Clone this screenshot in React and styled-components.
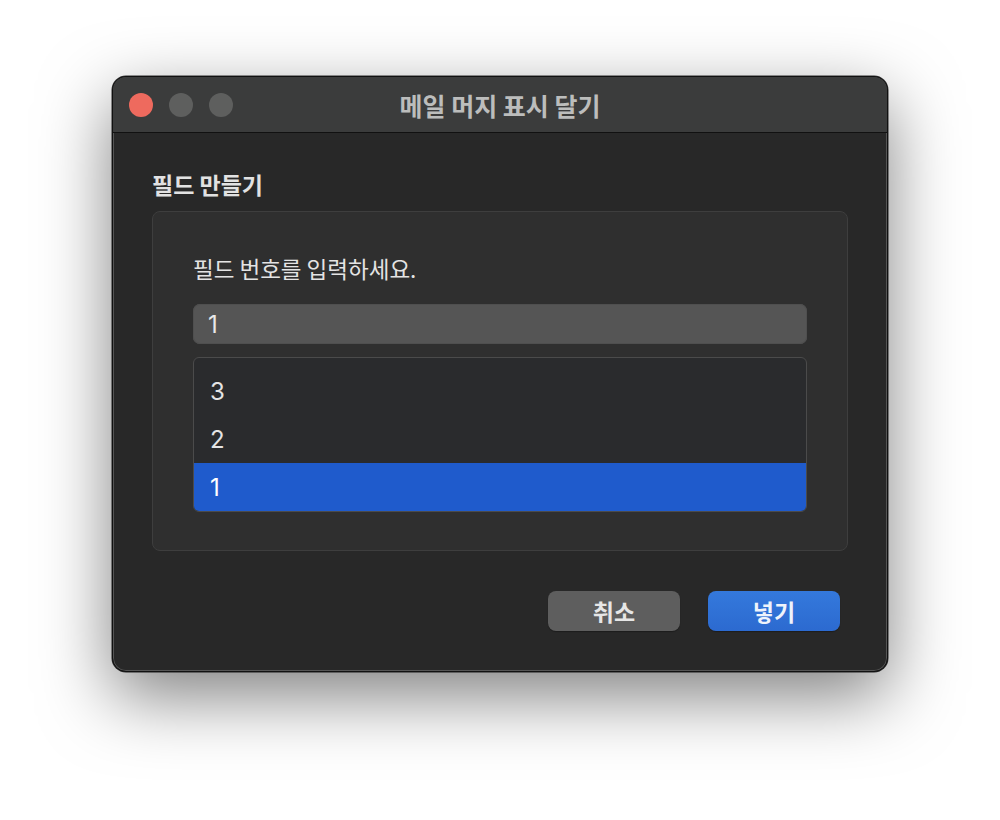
import React from "react";
import styled, { createGlobalStyle } from "styled-components";

const Global = createGlobalStyle`
  html, body { margin: 0; padding: 0; background: #ffffff; }
  body { font-family: "Noto Sans CJK KR", "Noto Sans", sans-serif; }
  * { box-sizing: border-box; }
`;

const Page = styled.div`
  width: 1000px;
  height: 820px;
  padding: 76px 0 0 112px;
  background: #ffffff;
`;

const Window = styled.div`
  width: 776px;
  height: 596px;
  border-radius: 14px;
  background: #282828;
  border: 1px solid #111;
  box-shadow: inset 0 0 0 1px #555, 0 24px 70px rgba(0,0,0,0.5), 0 0 0 0.5px rgba(0,0,0,0.8);
  overflow: hidden;
  display: flex;
  flex-direction: column;
`;

const TitleBar = styled.div`
  height: 56px;
  flex: none;
  background: #3b3c3c;
  border-bottom: 1px solid #111;
  display: flex;
  align-items: center;
  position: relative;
  padding-left: 16px;
`;

const Lights = styled.div`
  display: flex;
  gap: 16px;
`;

const Light = styled.span`
  width: 24px;
  height: 24px;
  border-radius: 50%;
  background: ${p => p.$c};
`;

const Title = styled.div`
  position: absolute;
  left: 0;
  right: 0;
  top: 0;
  bottom: 0;
  display: flex;
  align-items: center;
  justify-content: center;
  font-size: 25px;
  font-weight: 700;
  color: #bcbdbc;
  pointer-events: none;
`;

const Body = styled.div`
  flex: 1;
  padding: 37px 39px 0 39px;
  display: flex;
  flex-direction: column;
`;

const SectionTitle = styled.div`
  font-size: 23px;
  font-weight: 700;
  color: #e2e2e2;
  line-height: 28px;
  margin-bottom: 13px;
`;

const Group = styled.div`
  height: 340px;
  background: #2f2f2f;
  border: 1px solid #3e3e3e;
  border-radius: 8px;
  padding: 42px 40px 0 40px;
  display: flex;
  flex-direction: column;
`;

const Label = styled.div`
  font-size: 22.5px;
  color: #e4e4e4;
  line-height: 28px;
  margin-bottom: 22px;
`;

const Input = styled.div`
  height: 40px;
  background: #555555;
  border-radius: 7px;
  box-shadow: inset 0 0 0 1px #4f4f4f;
  padding-left: 15px;
  display: flex;
  align-items: center;
  font-size: 24px;
  color: #e8e8e8;
  font-family: "Inter", "Noto Sans", sans-serif;
  margin-bottom: 13px;
`;

const List = styled.div`
  height: 155px;
  background: #2a2b2d;
  border: 1px solid #4b4b4b;
  border-radius: 6px;
  padding-top: 9px;
  overflow: hidden;
  display: flex;
  flex-direction: column;
`;

const Row = styled.div`
  height: 48px;
  flex: none;
  display: flex;
  align-items: center;
  padding-left: 16px;
  font-size: 24px;
  font-family: "Inter", "Noto Sans", sans-serif;
  color: ${p => (p.$selected ? "#ffffff" : "#e4e4e4")};
  background: ${p => (p.$selected ? "#1f5bcc" : "transparent")};
`;

const Footer = styled.div`
  display: flex;
  justify-content: flex-end;
  gap: 28px;
  padding-top: 40px;
  padding-right: 8px;
`;

const Button = styled.button`
  width: 132px;
  height: 40px;
  border: none;
  border-radius: 8px;
  font-family: "Noto Sans CJK KR", sans-serif;
  font-size: 23px;
  font-weight: 700;
  color: ${p => (p.$primary ? "#eef3fb" : "#e6e6e6")};
  background: ${p =>
    p.$primary ? "linear-gradient(#3479dc, #2c6ad0)" : "#5e5e5e"};
  box-shadow: 0 1px 1px rgba(0,0,0,0.3);
  display: flex;
  align-items: center;
  justify-content: center;
  padding: 0;
`;

export default function App() {
  return (
    <>
      <Global />
      <Page>
        <Window>
          <TitleBar>
            <Lights>
              <Light $c="#ee6a5e" />
              <Light $c="#5e5f5e" />
              <Light $c="#5e5f5e" />
            </Lights>
            <Title>메일 머지 표시 달기</Title>
          </TitleBar>
          <Body>
            <SectionTitle>필드 만들기</SectionTitle>
            <Group>
              <Label>필드 번호를 입력하세요.</Label>
              <Input>1</Input>
              <List>
                <Row>3</Row>
                <Row>2</Row>
                <Row $selected>1</Row>
              </List>
            </Group>
            <Footer>
              <Button>취소</Button>
              <Button $primary>넣기</Button>
            </Footer>
          </Body>
        </Window>
      </Page>
    </>
  );
}
